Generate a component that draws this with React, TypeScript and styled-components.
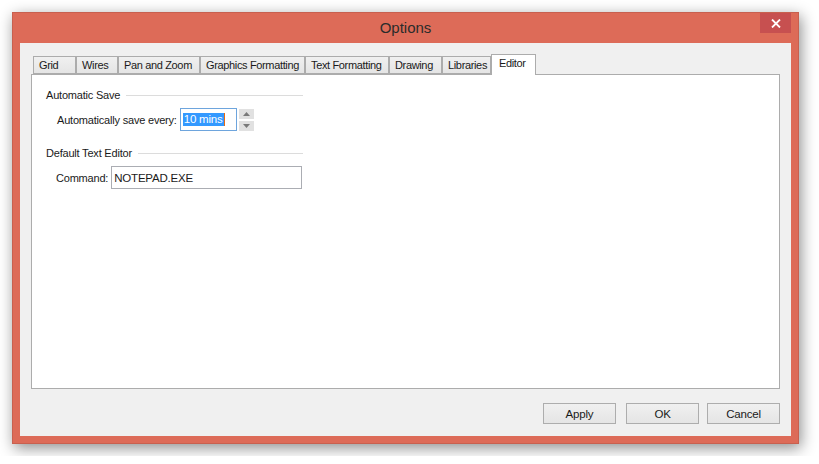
import { FC } from 'react';
import styled, { createGlobalStyle } from 'styled-components';

const tabs = [
  { label: 'Grid', width: 43 },
  { label: 'Wires', width: 42 },
  { label: 'Pan and Zoom', width: 82 },
  { label: 'Graphics Formatting', width: 105 },
  { label: 'Text Formatting', width: 84 },
  { label: 'Drawing', width: 53 },
  { label: 'Libraries', width: 49 },
  { label: 'Editor', width: 45 },
];

const App: FC = () => {
  const active = 'Editor';

  return (
    <>
      <GlobalStyle />
      <Frame>
        <TitleBar>
          <Title>Options</Title>
          <CloseButton type='button' aria-label='Close'>
            <svg width='10' height='9' viewBox='0 0 10 9'>
              <path d='M1 0.5 L9 8.5 M9 0.5 L1 8.5' stroke='#fff' strokeWidth='1.8' />
            </svg>
          </CloseButton>
        </TitleBar>

        <Client>
          <TabStrip>
            {tabs.map((t) => (
              <Tab key={t.label} $width={t.width} $active={t.label === active}>
                {t.label}
              </Tab>
            ))}
          </TabStrip>

          <Panel>
            <Group>
              <GroupHeader>
                <span>Automatic Save</span>
                <Rule />
              </GroupHeader>
              <FieldRow $indent={11}>
                <FieldLabel>Automatically save every:</FieldLabel>
                <TextBox $width={57} $focused>
                  <Selected>10 mins</Selected>
                  <Caret />
                </TextBox>
                <Spinner>
                  <SpinButton>
                    <svg width='7' height='4' viewBox='0 0 7 4'>
                      <path d='M0 4 L3.5 0 L7 4 Z' fill='#7a7a7a' />
                    </svg>
                  </SpinButton>
                  <SpinButton>
                    <svg width='7' height='4' viewBox='0 0 7 4'>
                      <path d='M0 0 L3.5 4 L7 0 Z' fill='#7a7a7a' />
                    </svg>
                  </SpinButton>
                </Spinner>
              </FieldRow>
            </Group>

            <Group>
              <GroupHeader>
                <span>Default Text Editor</span>
                <Rule />
              </GroupHeader>
              <FieldRow $indent={10}>
                <FieldLabel>Command:</FieldLabel>
                <TextBox $width={191}>NOTEPAD.EXE</TextBox>
              </FieldRow>
            </Group>
          </Panel>

          <ButtonBar>
            <DialogButton type='button'>Apply</DialogButton>
            <DialogButton type='button' $gap={10}>OK</DialogButton>
            <DialogButton type='button' $gap={8}>Cancel</DialogButton>
          </ButtonBar>
        </Client>
      </Frame>
    </>
  );
};

export default App;

// Styled Components
const GlobalStyle = createGlobalStyle`
  html, body {
    margin: 0;
    padding: 0;
    background: #ffffff;
  }
  body {
    font-family: "Liberation Sans", Arial, sans-serif;
    font-size: 11px;
    letter-spacing: -0.2px;
    color: #1a1a1a;
  }
`;

const Frame = styled.div`
  box-sizing: border-box;
  width: 787px;
  height: 432px;
  margin: 12px;
  display: flex;
  flex-direction: column;
  padding: 0 7px 7px;
  background: #dd6b58;
  border: 1px solid #c8604f;
  box-shadow: 2px 4px 14px rgba(0, 0, 0, 0.45);
`;

const TitleBar = styled.div`
  height: 30px;
  display: flex;
  align-items: center;
  justify-content: center;
  position: relative;
`;

const Title = styled.div`
  font-size: 15px;
  letter-spacing: 0;
  color: #2b2b2b;
  margin-top: -1px;
`;

const CloseButton = styled.button`
  position: absolute;
  top: 0;
  right: 0;
  width: 31px;
  height: 20px;
  border: none;
  padding: 0;
  background: #c75050;
  display: flex;
  align-items: center;
  justify-content: center;
`;

const Client = styled.div`
  flex: 1;
  display: flex;
  flex-direction: column;
  padding: 11px 11px 0 11px;
  background: #f0f0f0;
`;

const TabStrip = styled.div`
  display: flex;
  align-items: flex-end;
  height: 20px;
  padding-left: 2px;
`;

const Tab = styled.div<{ $width: number; $active?: boolean }>`
  box-sizing: border-box;
  width: ${(p) => p.$width}px;
  height: ${(p) => (p.$active ? 21 : 18)}px;
  margin-bottom: ${(p) => (p.$active ? -1 : 0)}px;
  padding: ${(p) => (p.$active ? '2px 0 0 7px' : '2px 0 0 5px')};
  border: 1px solid #acacac;
  border-bottom: ${(p) => (p.$active ? 'none' : '1px solid #acacac')};
  background: ${(p) =>
    p.$active ? '#ffffff' : 'linear-gradient(#f0f0f0, #e5e5e5)'};
  position: relative;
  z-index: ${(p) => (p.$active ? 2 : 0)};
  white-space: nowrap;
  overflow: hidden;
  letter-spacing: -0.35px;
`;

const Panel = styled.div`
  box-sizing: border-box;
  height: 315px;
  border: 1px solid #acacac;
  background: #ffffff;
  padding: 13px 0 0 14px;
  display: flex;
  flex-direction: column;
  gap: 15px;
`;

const Group = styled.div`
  width: 257px;
  display: flex;
  flex-direction: column;
  gap: 5px;
`;

const GroupHeader = styled.div`
  height: 14px;
  display: flex;
  align-items: center;
  gap: 6px;
  white-space: nowrap;
`;

const Rule = styled.div`
  flex: 1;
  height: 0;
  border-top: 1px solid #dcdcdc;
  margin-top: 1px;
`;

const FieldRow = styled.div<{ $indent: number }>`
  display: flex;
  align-items: center;
  padding-left: ${(p) => p.$indent}px;
  margin-top: 1px;
`;

const FieldLabel = styled.span`
  margin-right: 3px;
  white-space: nowrap;
`;

const TextBox = styled.div<{ $width: number; $focused?: boolean }>`
  box-sizing: border-box;
  width: ${(p) => p.$width}px;
  height: 23px;
  border: 1px solid ${(p) => (p.$focused ? '#6ea5dd' : '#abadb3')};
  background: #ffffff;
  display: flex;
  align-items: center;
  padding: 0 2px;
  font-size: 11.5px;
  white-space: nowrap;
`;

const Selected = styled.span`
  background: #3399ff;
  color: #ffffff;
  padding: 0 1px;
  line-height: 13px;
`;

const Caret = styled.span`
  width: 1px;
  height: 13px;
  background: #e86a10;
`;

const Spinner = styled.div`
  display: flex;
  flex-direction: column;
  gap: 2px;
  margin-left: 2px;
`;

const SpinButton = styled.div`
  width: 15px;
  height: 10px;
  background: #e1e1e1;
  display: flex;
  align-items: center;
  justify-content: center;
`;

const ButtonBar = styled.div`
  display: flex;
  justify-content: flex-end;
  margin-top: 14px;
`;

const DialogButton = styled.button<{ $gap?: number }>`
  box-sizing: border-box;
  width: 73px;
  height: 21px;
  margin-left: ${(p) => p.$gap ?? 0}px;
  border: 1px solid #adadad;
  background: linear-gradient(#f0f0f0, #e5e5e5);
  font-family: "Liberation Sans", Arial, sans-serif;
  font-size: 11.5px;
  letter-spacing: -0.2px;
  color: #1a1a1a;
  padding: 0;
`;
